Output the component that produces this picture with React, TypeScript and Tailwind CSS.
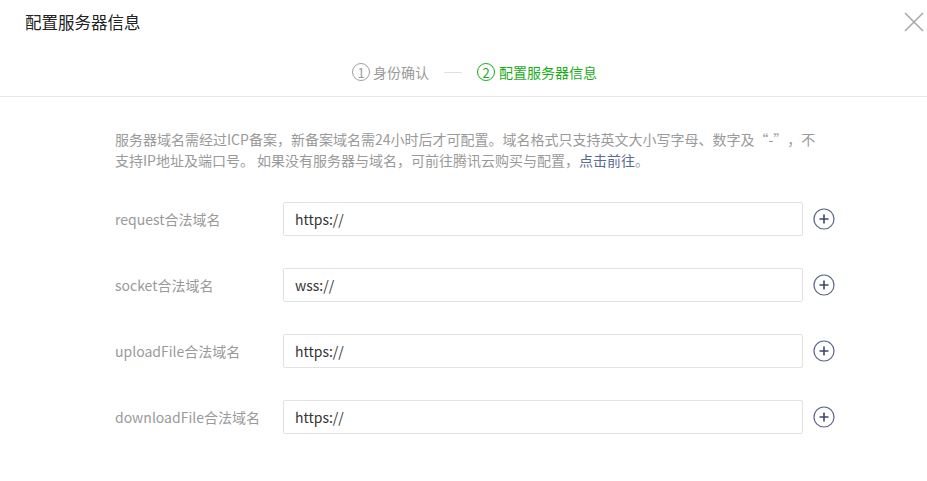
import React from "react";

const font = { fontFamily: '"Microsoft YaHei", "Noto Sans CJK SC", "Liberation Sans", sans-serif' };

function PlusIcon() {
  return (
    <svg width="22" height="22" viewBox="0 0 22 22" fill="none">
      <circle cx="11" cy="11" r="10" stroke="#5b6786" strokeWidth="1.2" />
      <path d="M11 6.5v9M6.5 11h9" stroke="#3e4866" strokeWidth="1.6" />
    </svg>
  );
}

const rows = [
  { label: "request合法域名", value: "https://" },
  { label: "socket合法域名", value: "wss://" },
  { label: "uploadFile合法域名", value: "https://" },
  { label: "downloadFile合法域名", value: "https://" },
];

export default function App() {
  return (
    <div className="w-[927px] h-[481px] bg-white overflow-hidden" style={font}>
      <div className="h-[44px] flex items-center justify-between pl-[25px] pr-[2px]">
        <div className="text-[16.5px] text-[#222]">配置服务器信息</div>
        <svg width="22" height="22" viewBox="0 0 22 22">
          <path d="M2 2L20 20M20 2L2 20" stroke="#a6a6a6" strokeWidth="1.5" />
        </svg>
      </div>
      <div className="h-[53px] flex items-center justify-center border-b border-[#e7e7e7] pl-[22px] pt-[4px]">
        <div className="flex items-center text-[14px] text-[#9a9a9a]">
          <span className="w-[18px] h-[18px] rounded-full border border-[#a0a0a0] flex items-center justify-center text-[13px] leading-none mr-[3px]">1</span>
          <span>身份确认</span>
        </div>
        <div className="w-[18px] h-px bg-[#e0e0e0] mx-[15px]" />
        <div className="flex items-center text-[14px] text-[#1aad19]">
          <span className="w-[18px] h-[18px] rounded-full border border-[#1aad19] flex items-center justify-center text-[13px] leading-none mr-[4px]">2</span>
          <span>配置服务器信息</span>
        </div>
      </div>
      <div className="pl-[115px] pt-[32px]">
        <p className="w-[730px] text-[14px] leading-[21px] text-[#9a9a9a] [text-spacing-trim:space-all]">
          服务器域名需经过ICP备案，新备案域名需24小时后才可配置。域名格式只支持英文大小写字母、数字及“-”，不
          <br />
          支持IP地址及端口号。 如果没有服务器与域名，可前往腾讯云购买与配置，<span className="text-[#576b95]">点击前往</span>。
        </p>
        <div className="mt-[31px] flex flex-col gap-[32px]">
          {rows.map((r) => (
            <div key={r.label} className="flex items-center">
              <div className="w-[168px] text-[14px] text-[#9a9a9a]">{r.label}</div>
              <div className="w-[520px] h-[34px] border border-[#e2e2e2] rounded-[2px] flex items-center px-[11px] text-[14px] text-[#353535]">
                {r.value}
              </div>
              <div className="ml-[10px] flex items-center">
                <PlusIcon />
              </div>
            </div>
          ))}
        </div>
      </div>
    </div>
  );
}
